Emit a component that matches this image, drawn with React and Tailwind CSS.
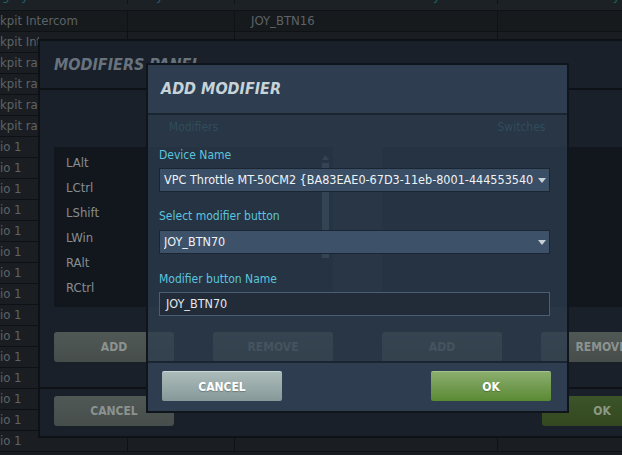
import React from 'react'

const tableRows = [
  { name: 'kpit Intercom', key: 'JOY_BTN16' },
  { name: 'kpit Intercom', key: '' },
  { name: 'kpit radio', key: '' },
  { name: 'kpit radio', key: '' },
  { name: 'kpit radio', key: '' },
  { name: 'kpit radio', key: '' },
  ...Array.from({ length: 15 }, () => ({ name: 'io 1', key: '' })),
]

const modifiers = ['LAlt', 'LCtrl', 'LShift', 'LWin', 'RAlt', 'RCtrl']

function BackgroundTable() {
  return (
    <div className="flex flex-col">
      <div className="grid h-[11px] grid-cols-[128px_107px_263px_1fr] overflow-hidden border-b border-[#101316] bg-[#1c2125] text-[13px] leading-[16px] text-[#22646b]">
        <div className="relative -top-[12px] border-r border-[#101316] pl-[2px]">gory</div>
        <div className="relative -top-[12px] border-r border-[#101316] pl-[14px]">Key</div>
        <div className="relative -top-[12px] border-r border-[#101316] pl-[160px]">Primary</div>
        <div className="relative -top-[12px] pl-[60px]">Secondary</div>
      </div>
      {tableRows.map((row, i) => (
        <div
          key={i}
          className={`grid h-[21px] grid-cols-[128px_107px_263px_1fr] border-b border-[#0f1215] text-[13px] leading-[20px] text-[#5d6367] ${i === 0 ? 'bg-[#161a1d]' : 'bg-[#1a1e22]'}`}
        >
          <div className="overflow-hidden whitespace-nowrap border-r border-[#0f1215]">{row.name}</div>
          <div className="border-r border-[#0f1215]"></div>
          <div className="border-r border-[#0f1215] pl-[16px]">{row.key}</div>
          <div></div>
        </div>
      ))}
    </div>
  )
}

function PanelButton({ children, green }) {
  return (
    <button
      className={`h-[30px] w-[120px] rounded-[3px] text-[12px] font-bold ${green ? 'bg-linear-to-b from-[#3c5429] to-[#334820] text-[#8b9984]' : 'bg-linear-to-b from-[#505855] to-[#464d4b] text-[#8c9290]'}`}
    >
      {children}
    </button>
  )
}

function ModifiersPanel() {
  return (
    <div className="absolute left-[38px] top-[39px] flex h-[399px] w-[640px] flex-col border-2 border-[#0e1216] bg-[#1a2029]">
      <div className="flex h-[49px] shrink-0 items-center border-b-2 border-[#0e1216] pl-[14px]">
        <h2 className="text-[16px] font-bold italic text-[#68737e]">MODIFIERS PANEL</h2>
      </div>
      <div className="flex flex-1 gap-[49px] px-[14px] pt-[29px]">
        {['Modifiers', 'Switches'].map((title, c) => (
          <div key={title} className="flex w-[279px] flex-col">
            <div className="h-[16px] text-center text-[12px] leading-[16px] text-[#3a7888]">{title}</div>
            <div className="relative mt-[12px] h-[160px] bg-[#12171d] pl-[12px] pt-[3px]">
              {c === 0 &&
                modifiers.map((m) => (
                  <div key={m} className="h-[25px] text-[13px] leading-[25px] text-[#878d92]">
                    {m}
                  </div>
                ))}
              {c === 0 && (
                <div className="absolute right-[4px] top-[8px] flex w-[7px] flex-col items-center">
                  <svg width="7" height="5" viewBox="0 0 7 5">
                    <path d="M0 5 L3.5 0 L7 5 Z" fill="#4a5866" />
                  </svg>
                  <div className="mt-[3px] h-[95px] w-[7px] bg-[#4a5866]"></div>
                </div>
              )}
            </div>
            <div className="mt-[25px] flex justify-between">
              <PanelButton>ADD</PanelButton>
              <PanelButton>REMOVE</PanelButton>
            </div>
          </div>
        ))}
      </div>
      <div className="flex h-[49px] shrink-0 justify-between border-t-2 border-[#0e1216] px-[14px] pt-[7px]">
        <PanelButton>CANCEL</PanelButton>
        <PanelButton green>OK</PanelButton>
      </div>
    </div>
  )
}

function Arrow() {
  return (
    <svg width="8" height="5" viewBox="0 0 8 5" className="ml-[5px] shrink-0">
      <path d="M0 0 H8 L4 5 Z" fill="#c9d1d8" />
    </svg>
  )
}

function Select({ value, light }) {
  return (
    <div className={`flex h-[24px] items-center border border-[#1c2632] pl-[4px] pr-[3px] ${light ? 'bg-[#3d5169]' : 'bg-[#3a4e65]'}`}>
      <span className="flex-1 overflow-hidden whitespace-nowrap text-[12.5px] text-[#eef3f6]">{value}</span>
      <Arrow />
    </div>
  )
}

function AddModifierDialog() {
  return (
    <div className="absolute left-[146px] top-[63px] flex h-[350px] w-[423px] flex-col border-2 border-[#0f151b]">
      <div className="flex h-[50px] shrink-0 items-center border-b-2 border-[#1b2530] bg-[#2e3d50] pl-[13px]">
        <h2 className="text-[16px] font-bold italic text-[#c6d3d8]">ADD MODIFIER</h2>
      </div>
      <div className="flex flex-1 flex-col bg-[#2d3d4f]/75 pl-[11px] pr-[17px] pt-[33px]">
        <label className="h-[14px] text-[12px] leading-[14px] text-[#5cc4de]">Device Name</label>
        <div className="mt-[6px]">
          <Select value="VPC Throttle MT-50CM2 {BA83EAE0-67D3-11eb-8001-444553540000}" />
        </div>
        <label className="mt-[17px] h-[14px] text-[12px] leading-[14px] text-[#5cc4de]">Select modifier button</label>
        <div className="mt-[7px]">
          <Select value="JOY_BTN70" light />
        </div>
        <label className="mt-[18px] h-[14px] text-[12px] leading-[14px] text-[#5cc4de]">Modifier button Name</label>
        <div className="mt-[6px] flex h-[24px] items-center border border-[#4a5e75] bg-[#222c39] pl-[6px] text-[12.5px] text-[#e2e8ec]">
          JOY_BTN70
        </div>
      </div>
      <div className="flex h-[50px] shrink-0 justify-between border-t-2 border-[#1b2530] bg-[#2e3d50] pl-[14px] pr-[16px] pt-[8px]">
        <button className="h-[30px] w-[120px] rounded-[2px] border-t border-[#cbd6d6] bg-linear-to-b from-[#abbbba] to-[#869998] text-[12px] font-bold text-white [text-shadow:0_1px_1px_rgba(0,0,0,0.25)]">
          CANCEL
        </button>
        <button className="h-[30px] w-[120px] rounded-[2px] border-t border-[#a4c38a] bg-linear-to-b from-[#8bad6d] to-[#5a8a33] text-[12px] font-bold text-white [text-shadow:0_1px_1px_rgba(0,0,0,0.25)]">
          OK
        </button>
      </div>
    </div>
  )
}

export default function App() {
  return (
    <div className="relative h-[455px] w-[622px] overflow-hidden bg-[#181c20] font-['DejaVu_Sans_Condensed','DejaVu_Sans',sans-serif] [font-stretch:semi-condensed]">
      <BackgroundTable />
      <ModifiersPanel />
      <AddModifierDialog />
    </div>
  )
}
